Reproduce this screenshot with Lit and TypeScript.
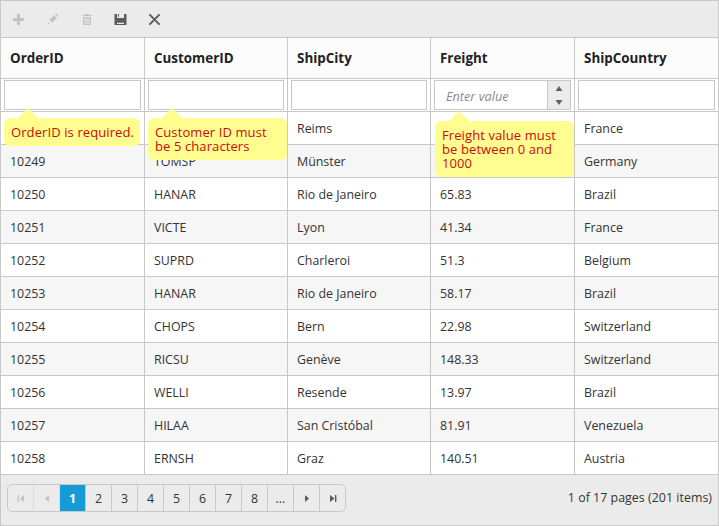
import { LitElement, html, css, svg } from "lit";
import { customElement } from "lit/decorators.js";
import { classMap } from "lit/directives/class-map.js";

const COLUMNS = ["OrderID", "CustomerID", "ShipCity", "Freight", "ShipCountry"];

const ROWS = [
  ["", "", "Reims", "", "France"],
  ["10249", "TOMSP", "Münster", "", "Germany"],
  ["10250", "HANAR", "Rio de Janeiro", "65.83", "Brazil"],
  ["10251", "VICTE", "Lyon", "41.34", "France"],
  ["10252", "SUPRD", "Charleroi", "51.3", "Belgium"],
  ["10253", "HANAR", "Rio de Janeiro", "58.17", "Brazil"],
  ["10254", "CHOPS", "Bern", "22.98", "Switzerland"],
  ["10255", "RICSU", "Genève", "148.33", "Switzerland"],
  ["10256", "WELLI", "Resende", "13.97", "Brazil"],
  ["10257", "HILAA", "San Cristóbal", "81.91", "Venezuela"],
  ["10258", "ERNSH", "Graz", "140.51", "Austria"],
];

const TOOLS = [
  { name: "add", off: true, shape: svg`<path d="M5 1h3v4h4v3H8v4H5V8H1V5h4z"/>` },
  {
    name: "edit",
    off: true,
    shape: svg`<path d="M9 1.400l1-.8L12.400 3l-.8 1zM8 2.200L10.900 5l-4.600 4.700-3-2.900zM2.300 9.300l1.500 1.500L1 12z"/>`,
  },
  {
    name: "delete",
    off: true,
    shape: svg`<path fill-rule="evenodd" d="M5 1h4v1h3v1H2V2h3zM3 4h8v8H3zm1.500 1v6h1V5zm2 0v6h1V5zm2 0v6h1V5z"/>`,
  },
  {
    name: "save",
    off: false,
    shape: svg`<path fill-rule="evenodd" d="M.500 1H3v4h7V1h2.500v11H.500zM3 9.700V11h7V9.700zM4 1h1v2.800H4z"/>`,
  },
  {
    name: "cancel",
    off: false,
    shape: svg`<path d="M1.400 1.400l10.200 10.200M11.600 1.400l-10.200 10.200" fill="none" stroke="currentColor" stroke-width="1.900"/>`,
  },
];

@customElement("edit-hint")
class EditHint extends LitElement {
  static styles = css`
    :host {
      position: absolute;
      z-index: 2;
      left: 3px;
      top: 39px;
      box-sizing: border-box;
      padding: 7px;
      border-radius: 6px;
      background: #fffd8f;
      color: #cd0a0a;
      font-size: 13px;
      line-height: 14px;
      letter-spacing: 0.1px;
      white-space: nowrap;
    }
    :host::before {
      content: "";
      position: absolute;
      left: 14px;
      top: -10px;
      border: 10px solid transparent;
      border-top-width: 0;
      border-bottom-color: #fffd8f;
    }
  `;
  render() {
    return html`<slot></slot>`;
  }
}

@customElement("app-root")
class AppRoot extends LitElement {
  static styles = css`
    :host {
      display: block;
      box-sizing: border-box;
      width: 719px;
      height: 526px;
      border: 1px solid #c8c8c8;
      background: #ebebeb;
      color: #333;
      font: 12.4px "Open Sans", "Noto Sans", sans-serif;
      overflow: hidden;
    }
    .toolbar {
      display: flex;
      align-items: center;
      gap: 21px;
      height: 36px;
      padding-left: 11px;
      color: #5c5c5c;
    }
    .tool {
      display: block;
      width: 13px;
      height: 13px;
      fill: currentColor;
    }
    .off {
      color: #c3c3c3;
    }
    .row {
      display: grid;
      grid-template-columns: 144px 143px 143px 144px 143px;
      height: 33px;
      box-sizing: border-box;
      border-bottom: 1px solid #c8c8c8;
      background: #fff;
    }
    .alt {
      background: #f6f6f6;
    }
    .head {
      height: 42px;
      border-top: 1px solid #c8c8c8;
      background: #fcfcfc;
      color: #222;
      font-size: 13.4px;
      font-weight: 700;
    }
    .cell {
      position: relative;
      box-sizing: border-box;
      display: flex;
      align-items: center;
      padding: 1px 0 0 9px;
      border-right: 1px solid #c8c8c8;
      white-space: nowrap;
    }
    .cell:last-child {
      border-right: 0;
    }
    .head .cell {
      padding-top: 0;
    }
    .form .cell {
      align-items: stretch;
      padding: 1px 3px;
    }
    .field {
      flex: 1;
      display: flex;
      box-sizing: border-box;
      border: 1px solid #c8c8c8;
      background: #fff;
    }
    .value {
      flex: 1;
      display: flex;
      align-items: center;
      padding: 1px 0 0 11px;
      color: #8a8a8a;
      font-size: 12.7px;
      font-style: italic;
    }
    .spin {
      width: 22px;
      border-left: 1px solid #c8c8c8;
      background: #ebebeb;
      fill: #5f5f5f;
    }
    .id-hint {
      width: 136px;
      height: 28px;
    }
    .customer-hint {
      width: 139px;
      height: 42px;
    }
    .freight-hint {
      left: 4px;
      top: 42px;
      width: 139px;
      height: 56px;
    }
    .pager {
      display: flex;
      justify-content: space-between;
      align-items: flex-start;
      padding: 9px 6px 0;
    }
    .pages {
      display: flex;
      box-sizing: border-box;
      width: 339px;
      height: 28px;
      border: 1px solid #c8c8c8;
      border-radius: 5px;
      overflow: hidden;
    }
    .page {
      box-sizing: border-box;
      width: 26px;
      flex: none;
      display: flex;
      align-items: center;
      justify-content: center;
      padding-top: 1px;
      border-right: 1px solid #c8c8c8;
    }
    .page:last-child {
      width: 25px;
      border-right: 0;
    }
    .nav {
      padding: 0;
      color: #5c5c5c;
    }
    .nav.off {
      color: #c3c3c3;
      border-right-color: #dcdcdc;
    }
    .arrow {
      width: 9px;
      height: 9px;
      fill: currentColor;
    }
    .current {
      background: #179bd7;
      color: #fff;
      font-weight: 700;
    }
    .status {
      line-height: 27px;
      letter-spacing: 0.03px;
    }
  `;

  private editor(i: number) {
    return html`<div class="cell">
      <div class="field">
        ${i === 3
          ? html`<span class="value">Enter value</span>
              <svg class="spin" viewBox="0 0 22 28">
                <path d="M7.5 10L11 5l3.5 5zM7.5 19L11 24l3.5-5z" />
              </svg>`
          : ""}
      </div>
      ${i === 0 ? html`<edit-hint class="id-hint">OrderID is required.</edit-hint>` : ""}
      ${i === 1
        ? html`<edit-hint class="customer-hint">Customer ID must<br />be 5 characters</edit-hint>`
        : ""}
      ${i === 3
        ? html`<edit-hint class="freight-hint">Freight value must<br />be between 0 and<br />1000</edit-hint>`
        : ""}
    </div>`;
  }

  private nav(path: string, off = false) {
    return html`<div class=${classMap({ page: true, nav: true, off })}>
      <svg class="arrow" viewBox="0 0 9 9"><path d=${path} /></svg>
    </div>`;
  }

  render() {
    return html`
      <div class="toolbar">
        ${TOOLS.map(
          (t) => html`<svg class=${classMap({ tool: true, off: t.off })} viewBox="0 0 13 13" aria-label=${t.name}>
            ${t.shape}
          </svg>`
        )}
      </div>
      <div class="row head">${COLUMNS.map((c) => html`<div class="cell">${c}</div>`)}</div>
      <div class="row form">${COLUMNS.map((_, i) => this.editor(i))}</div>
      ${ROWS.map(
        (r, i) => html`<div class=${classMap({ row: true, alt: i % 2 === 1 })}>
          ${r.map((v) => html`<div class="cell">${v}</div>`)}
        </div>`
      )}
      <div class="pager">
        <div class="pages">
          ${this.nav("M1.700 1H3v7H1.700zM8 1v7L3.800 4.500z", true)} ${this.nav("M7 1v7L3 4.500z", true)}
          ${["1", "2", "3", "4", "5", "6", "7", "8", "..."].map(
            (p) => html`<div class=${classMap({ page: true, current: p === "1" })}>${p}</div>`
          )}
          ${this.nav("M3 1v7l4-3.500z")} ${this.nav("M7 1h1.400v7H7zM2 1v7l4.500-3.500z")}
        </div>
        <div class="status">1 of 17 pages (201 items)</div>
      </div>
    `;
  }
}
